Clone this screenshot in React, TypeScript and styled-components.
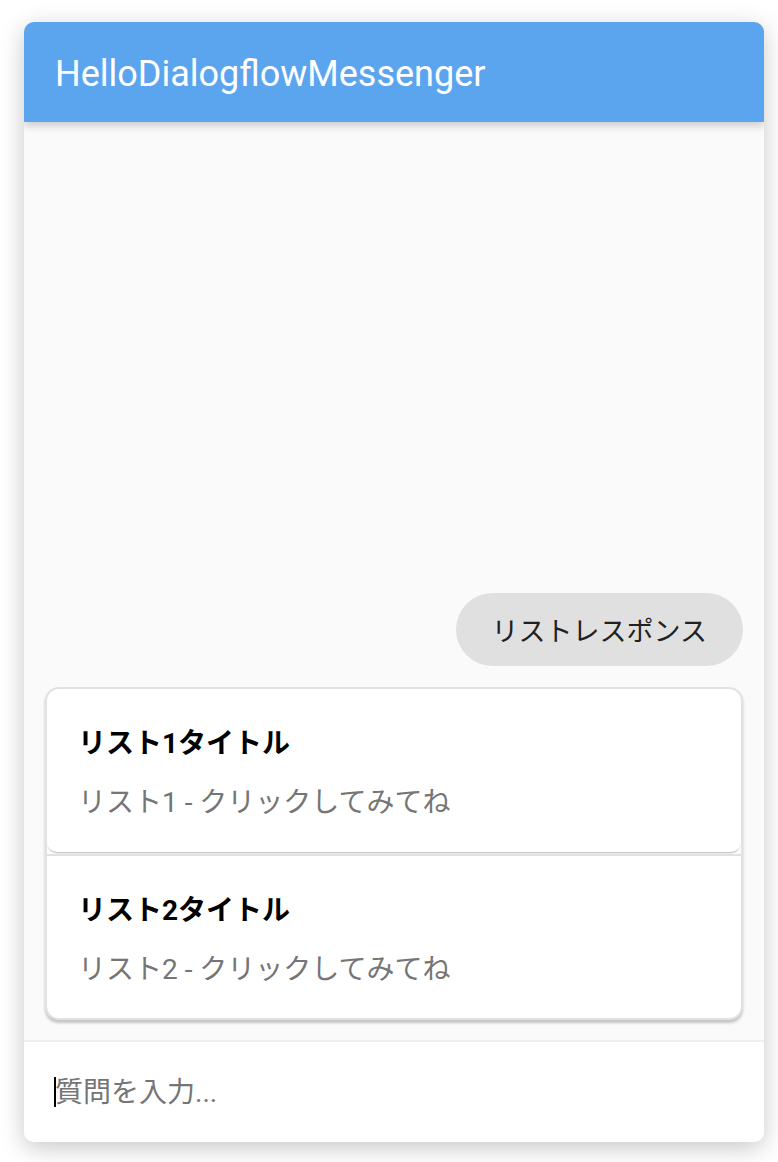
import * as React from 'react'
import styled, { createGlobalStyle } from 'styled-components'

const GlobalStyle = createGlobalStyle`
    html, body {
        margin: 0;
        padding: 0;
        background: #ffffff;
    }
    body {
        font-family: Roboto, "Noto Sans CJK JP", sans-serif;
    }
`

const Page = styled.div`
    padding: 22px 14px 20px 24px;
`

const Messenger = styled.div`
    width: 740px;
    height: 1120px;
    display: flex;
    flex-direction: column;
    border-radius: 10px;
    overflow: hidden;
    background: #fafafa;
    box-shadow: 0 6px 24px rgba(0, 0, 0, 0.22);
`

const TitleBar = styled.div`
    height: 100px;
    flex-shrink: 0;
    display: flex;
    align-items: center;
    padding: 4px 31px 0;
    box-sizing: border-box;
    background: #5ba5ef;
    color: #ffffff;
    font-size: 36px;
    box-shadow: 0 4px 8px rgba(0, 0, 0, 0.18);
    position: relative;
    z-index: 1;
`

const MessageList = styled.div`
    flex: 1;
    display: flex;
    flex-direction: column;
    justify-content: flex-end;
    gap: 21px;
    padding: 0 21px 20px 21px;
`

const UserBubble = styled.div`
    align-self: flex-end;
    height: 73px;
    display: flex;
    align-items: center;
    padding: 0 36px;
    border-radius: 37px;
    background: #e0e0e0;
    color: #212121;
    font-size: 27px;
`

const ListCard = styled.div`
    display: flex;
    flex-direction: column;
    background: #ffffff;
    border: 2px solid #e2e2e2;
    border-radius: 14px;
    box-shadow: 0 3px 3px rgba(0, 0, 0, 0.22);
    overflow: hidden;
`

const ListItem = styled.div<{ last?: boolean }>`
    height: ${({ last }) => (last ? '162px' : '163px')};
    display: flex;
    flex-direction: column;
    justify-content: center;
    gap: 19px;
    padding: 0 31px;
    border-radius: 0 0 10px 10px;
    box-shadow: 0 2px 2px -1px rgba(0, 0, 0, 0.3);
`

const Divider = styled.div`
    height: 2px;
    margin-top: 2px;
    background: #e0e0e0;
`

const ItemTitle = styled.div`
    font-size: 28px;
    font-weight: 700;
    color: #000000;
`

const ItemSubtitle = styled.div`
    font-size: 28px;
    color: #757575;
`

const InputBar = styled.div`
    height: 100px;
    flex-shrink: 0;
    display: flex;
    align-items: center;
    padding: 0 30px;
    background: #ffffff;
    border-top: 2px solid #eeeeee;
`

const Caret = styled.span`
    width: 2px;
    height: 30px;
    flex-shrink: 0;
    margin-right: -1px;
    background: #000000;
`

const TextInput = styled.input`
    flex: 1;
    border: none;
    outline: none;
    background: transparent;
    font-family: Roboto, "Noto Sans CJK JP", sans-serif;
    font-size: 28px;
    color: #212121;
    caret-color: transparent;
    padding: 0;

    &::placeholder {
        color: #757575;
    }
`

const items = [
    { title: 'リスト1タイトル', subtitle: 'リスト1 - クリックしてみてね' },
    { title: 'リスト2タイトル', subtitle: 'リスト2 - クリックしてみてね' },
]

const App: React.FC = () => {
    return (
        <>
            <GlobalStyle />
            <Page>
                <Messenger>
                    <TitleBar>HelloDialogflowMessenger</TitleBar>
                    <MessageList>
                        <UserBubble>リストレスポンス</UserBubble>
                        <ListCard>
                            {items.map((item, i) => (
                                <React.Fragment key={item.title}>
                                    {i > 0 && <Divider />}
                                    <ListItem last={i === items.length - 1}>
                                        <ItemTitle>{item.title}</ItemTitle>
                                        <ItemSubtitle>{item.subtitle}</ItemSubtitle>
                                    </ListItem>
                                </React.Fragment>
                            ))}
                        </ListCard>
                    </MessageList>
                    <InputBar>
                        <Caret />
                        <TextInput placeholder="質問を入力..." />
                    </InputBar>
                </Messenger>
            </Page>
        </>
    )
}

export default App
